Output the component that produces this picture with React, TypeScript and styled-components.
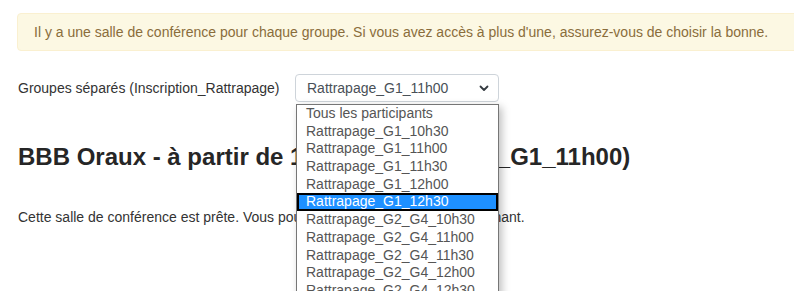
import styled, { createGlobalStyle } from "styled-components";

const GlobalStyle = createGlobalStyle`
  html, body {
    margin: 0;
    padding: 0;
    background: #ffffff;
    overflow: hidden;
  }
  body {
    font-family: "Liberation Sans", Arial, sans-serif;
    color: #333333;
  }
`;

const Page = styled.div`
  width: 794px;
  height: 291px;
  padding: 13px 0 0 18px;
  box-sizing: border-box;
  overflow: hidden;
`;

const Alert = styled.div`
  height: 38px;
  margin: 0 -30px 0 -1px;
  padding: 0 16px;
  display: flex;
  align-items: center;
  background-color: #fcf8e3;
  border: 1px solid #faf0d0;
  border-radius: 4px;
  box-sizing: border-box;
  color: #8a6d3b;
  font-size: 14px;
`;

const GroupRow = styled.div`
  margin-top: 23px;
  display: flex;
  align-items: center;
  font-size: 14px;
`;

const Label = styled.label`
  width: 277px;
  color: #333333;
`;

const SelectWrap = styled.div`
  position: relative;
`;

const SelectBox = styled.div`
  width: 204px;
  height: 28px;
  box-sizing: border-box;
  padding: 0 9px 0 11px;
  display: flex;
  align-items: center;
  justify-content: space-between;
  border: 1px solid #ced4da;
  border-radius: 4px;
  background: #ffffff;
  color: #495057;
`;

const Dropdown = styled.ul`
  position: absolute;
  top: 30px;
  left: 1px;
  width: 203px;
  margin: 0;
  padding: 0;
  list-style: none;
  border: 1px solid #767676;
  box-sizing: border-box;
  background: #ffffff;
  box-shadow: 3px 3px 8px rgba(0, 0, 0, 0.25);
  z-index: 10;
`;

const Option = styled.li<{ $selected?: boolean }>`
  height: 17.7px;
  line-height: 17.7px;
  padding-left: 9px;
  box-sizing: border-box;
  white-space: nowrap;
  font-size: 14px;
  color: ${(p) => (p.$selected ? "#ffffff" : "#555555")};
  background: ${(p) => (p.$selected ? "#1e90ff" : "transparent")};
  box-shadow: ${(p) => (p.$selected ? "inset 0 0 0 2px #000000" : "none")};
`;

const Heading = styled.h3`
  margin: 41px 0 0;
  font-size: 24px;
  line-height: 28px;
  font-weight: bold;
  color: #262626;
  white-space: nowrap;
`;

const Text = styled.p`
  margin: 38px 0 0;
  font-size: 14px;
  color: #333333;
  white-space: nowrap;
`;

const options = [
  "Tous les participants",
  "Rattrapage_G1_10h30",
  "Rattrapage_G1_11h00",
  "Rattrapage_G1_11h30",
  "Rattrapage_G1_12h00",
  "Rattrapage_G1_12h30",
  "Rattrapage_G2_G4_10h30",
  "Rattrapage_G2_G4_11h00",
  "Rattrapage_G2_G4_11h30",
  "Rattrapage_G2_G4_12h00",
  "Rattrapage_G2_G4_12h30",
  "Rattrapage_G3_10h30",
];

function Chevron() {
  return (
    <svg width="10" height="7" viewBox="0 0 10 7">
      <path
        d="M1.5 1.5 L5 5 L8.5 1.5"
        fill="none"
        stroke="#343a40"
        strokeWidth="1.8"
        strokeLinecap="round"
        strokeLinejoin="round"
      />
    </svg>
  );
}

export default function App() {
  return (
    <>
      <GlobalStyle />
      <Page>
        <Alert>
          Il y a une salle de conférence pour chaque groupe. Si vous avez accès
          à plus d'une, assurez-vous de choisir la bonne.
        </Alert>
        <GroupRow>
          <Label>Groupes séparés (Inscription_Rattrapage)</Label>
          <SelectWrap>
            <SelectBox>
              <span>Rattrapage_G1_11h00</span>
              <Chevron />
            </SelectBox>
            <Dropdown>
              {options.map((o) => (
                <Option key={o} $selected={o === "Rattrapage_G1_12h30"}>
                  {o}
                </Option>
              ))}
            </Dropdown>
          </SelectWrap>
        </GroupRow>
        <Heading>BBB Oraux - à partir de 11h00 (Rattrapage_G1_11h00)</Heading>
        <Text>
          Cette salle de conférence est prête. Vous pouvez rejoindre la session
          maintenant.
        </Text>
      </Page>
    </>
  );
}
